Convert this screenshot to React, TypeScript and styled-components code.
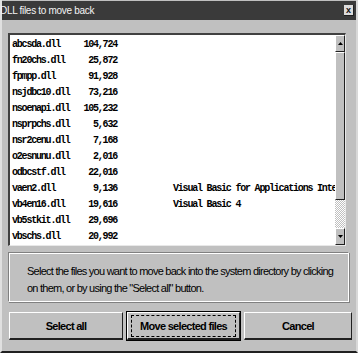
import React, { ReactElement } from 'react';
import styled, { createGlobalStyle } from 'styled-components';

const GlobalStyle = createGlobalStyle`
  html, body {
    margin: 0;
    padding: 0;
    background: #c0c0c0;
  }
`;

const Window = styled.div`
  width: 358px;
  height: 353px;
  box-sizing: border-box;
  background: #c0c0c0;
  border-left: 2px solid #e0e0e0;
  border-bottom: 2px solid #202020;
  border-right: 2px solid #d8d8d8;
  display: flex;
  flex-direction: column;
  font-family: "Liberation Sans", Arial, sans-serif;
`;

const TitleBar = styled.div`
  height: 19px;
  margin-top: 1px;
  background: #3a3a3a;
  display: flex;
  align-items: center;
  justify-content: space-between;
  padding-right: 2px;
`;

const Title = styled.span`
  color: #f4f4f4;
  font-size: 10px;
  letter-spacing: -0.3px;
  margin-left: -2px;
`;

const CloseButton = styled.div`
  width: 9px;
  height: 10px;
  background: #dcdcdc;
  border-right: 1px solid #202020;
  border-bottom: 1px solid #202020;
  font-size: 9px;
  font-weight: bold;
  line-height: 10px;
  text-align: center;
  color: #111;
`;

const Body = styled.div`
  padding: 13px 7px 0 6px;
  display: flex;
  flex-direction: column;
`;

const ListBox = styled.div`
  height: 213px;
  box-sizing: border-box;
  background: #ffffff;
  border-top: 2px solid #404040;
  border-left: 2px solid #404040;
  border-right: 1px solid #e8e8e8;
  border-bottom: 1px solid #e8e8e8;
  display: flex;
  margin-right: 3px;
`;

const Rows = styled.div`
  flex: 1;
  overflow: hidden;
  padding: 1px 0 0 2px;
`;

const Row = styled.div`
  display: grid;
  grid-template-columns: 70px 35px 56px 164px;
  height: 16px;
  align-items: center;
  font-family: "Liberation Mono", "DejaVu Sans Mono", monospace;
  font-size: 10px;
  font-weight: bold;
  letter-spacing: -1.2px;
  color: #000;
  white-space: nowrap;
`;

const Size = styled.span`
  text-align: right;
`;

const Desc = styled.span`
  grid-column: 4;
`;

const ScrollBar = styled.div`
  width: 10px;
  display: flex;
  flex-direction: column;
  background-image: repeating-conic-gradient(#c0c0c0 0 25%, #ffffff 0 50%);
  background-size: 2px 2px;
`;

const ArrowButton = styled.div`
  height: 17px;
  box-sizing: border-box;
  background: #c0c0c0;
  border-top: 1px solid #ffffff;
  border-left: 1px solid #ffffff;
  border-right: 1px solid #202020;
  border-bottom: 1px solid #202020;
  display: flex;
  align-items: center;
  justify-content: center;
`;

const Thumb = styled.div`
  height: 148px;
  box-sizing: border-box;
  background: #c0c0c0;
  border-top: 1px solid #ffffff;
  border-left: 1px solid #ffffff;
  border-right: 1px solid #202020;
  border-bottom: 1px solid #202020;
`;

const Track = styled.div`
  flex: 1;
`;

const InfoPanel = styled.div`
  margin-top: 6px;
  height: 50px;
  box-sizing: border-box;
  border-top: 1px solid #808080;
  border-left: 1px solid #808080;
  border-right: 1px solid #ffffff;
  border-bottom: 1px solid #ffffff;
  box-shadow: inset 1px 1px 0 #ffffff, 1px 1px 0 #808080;
  padding: 10px 0 0 18px;
  font-size: 11px;
  letter-spacing: -0.75px;
  line-height: 17px;
  color: #000;
`;

const ButtonRow = styled.div`
  margin-top: 10px;
  display: grid;
  grid-template-columns: 114px 113px 108px;
  gap: 4px;
  margin-left: 1px;
`;

const Button = styled.button<{ $focused?: boolean }>`
  height: 28px;
  box-sizing: border-box;
  background: #c0c0c0;
  border: none;
  border-top: 1px solid #ffffff;
  border-left: 1px solid #ffffff;
  border-right: 1px solid #202020;
  border-bottom: 2px solid #202020;
  outline: ${(p) => (p.$focused ? '1px solid #000' : 'none')};
  outline-offset: 0;
  padding: 0;
  display: flex;
  align-items: center;
  justify-content: center;
  font-family: "Liberation Sans", Arial, sans-serif;
  font-size: 11px;
  font-weight: bold;
  letter-spacing: -0.7px;
  color: #000;
`;

const FocusRing = styled.span`
  border: 1px dashed #000;
  padding: 4px 8px;
`;

const files: [string, string, string][] = [
  ['abcsda.dll', '104,724', ''],
  ['fn20chs.dll', '25,872', ''],
  ['fpmpp.dll', '91,928', ''],
  ['nsjdbc10.dll', '73,216', ''],
  ['nsoenapi.dll', '105,232', ''],
  ['nsprpchs.dll', '5,632', ''],
  ['nsr2cenu.dll', '7,168', ''],
  ['o2esnunu.dll', '2,016', ''],
  ['odbcstf.dll', '22,016', ''],
  ['vaen2.dll', '9,136', 'Visual Basic for Applications Inte'],
  ['vb4en16.dll', '19,616', 'Visual Basic 4'],
  ['vb5stkit.dll', '29,696', ''],
  ['vbschs.dll', '20,992', ''],
];

export default function App(): ReactElement {
  return (
    <>
      <GlobalStyle />
      <Window>
        <TitleBar>
          <Title>DLL files to move back</Title>
          <CloseButton>x</CloseButton>
        </TitleBar>
        <Body>
          <ListBox>
            <Rows>
              {files.map(([name, size, desc]) => (
                <Row key={name}>
                  <span>{name}</span>
                  <Size>{size}</Size>
                  <Desc>{desc}</Desc>
                </Row>
              ))}
            </Rows>
            <ScrollBar>
              <ArrowButton>
                <svg width="5" height="3" viewBox="0 0 5 3">
                  <path d="M2.5 0 L5 3 L0 3 Z" fill="#000" />
                </svg>
              </ArrowButton>
              <Thumb />
              <Track />
              <ArrowButton>
                <svg width="5" height="3" viewBox="0 0 5 3">
                  <path d="M0 0 L5 0 L2.5 3 Z" fill="#000" />
                </svg>
              </ArrowButton>
            </ScrollBar>
          </ListBox>
          <InfoPanel>
            Select the files you want to move back into the system directory by clicking
            <br />
            on them, or by using the "Select all" button.
          </InfoPanel>
          <ButtonRow>
            <Button>Select all</Button>
            <Button $focused>
              <FocusRing>Move selected files</FocusRing>
            </Button>
            <Button>Cancel</Button>
          </ButtonRow>
        </Body>
      </Window>
    </>
  );
}
